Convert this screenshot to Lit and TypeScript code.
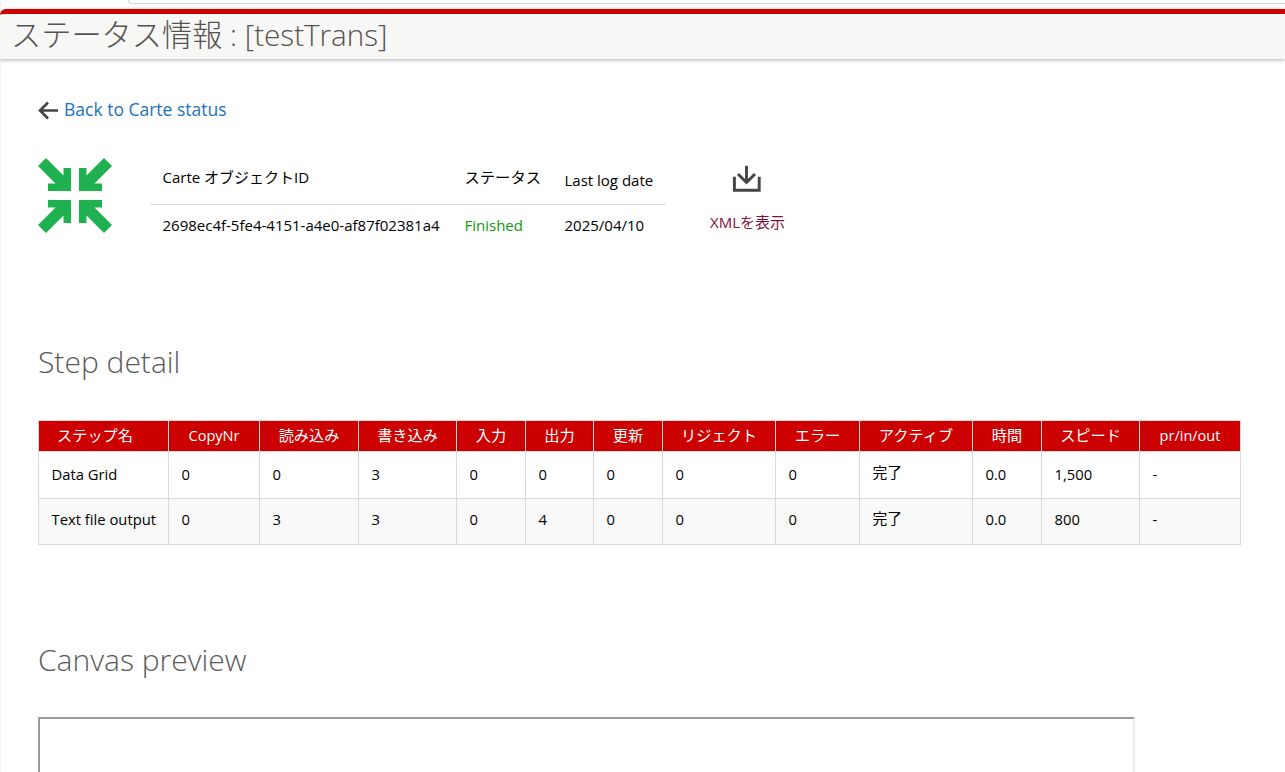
import { LitElement, html, css } from "lit";
import { customElement } from "lit/decorators.js";

const HEAD = ["ステップ名", "CopyNr", "読み込み", "書き込み", "入力", "出力", "更新", "リジェクト", "エラー", "アクティブ", "時間", "スピード", "pr/in/out"];
const ROWS = [
  ["Data Grid", "0", "0", "3", "0", "0", "0", "0", "0", "完了", "0.0", "1,500", "-"],
  ["Text file output", "0", "3", "3", "0", "4", "0", "0", "0", "完了", "0.0", "800", "-"],
];

@customElement("app-root")
export class AppRoot extends LitElement {
  static styles = css`
    :host { display: block; height: 772px; overflow: hidden; background: #fff; box-shadow: inset 1px 0 #f2f2f2; font-family: "Open Sans", "Noto Sans CJK JP", sans-serif; font-size: 15px; color: #000; }
    .chrome { height: 9px; overflow: hidden; }
    .chrome-field { height: 3px; margin-left: 128px; border: 1px solid #d4d4d4; border-top: 0; border-right: 0; border-bottom-left-radius: 8px; }
    .banner { height: 45px; background: #f7f7f5; border-top: 5px solid #cc0000; border-top-left-radius: 6px; box-shadow: 0 1px 4px rgba(0,0,0,.32); padding-left: 11px; display: flex; align-items: center; }
    .banner h1 { margin: 0 0 4px; font-weight: 300; font-size: 30.2px; line-height: 42px; color: #55524f; white-space: nowrap; }
    .banner .name { font-size: 29.6px; }
    main { padding: 36px 0 0 38px; }
    .back { display: flex; align-items: center; gap: 5px; height: 28px; font-size: 17.5px; color: #1d72c0; }
    .back svg { display: block; }
    .summary { display: flex; margin-top: 35px; height: 80px; }
    .logo { width: 74px; height: 75px; flex: none; margin-right: 38px; }
    .info { width: 516px; flex: none; }
    .info-row { display: grid; grid-template-columns: 302px 100px 1fr; padding-left: 12.5px; white-space: nowrap; line-height: 20px; }
    .info-head { padding-bottom: 8px; height: 38px; align-items: center; border-bottom: 1px solid #dfdfdf; }
    .info-head span:nth-child(3) { padding-top: 5px; }
    .info-head span:nth-child(2) { font-size: 15.3px; }
    .info-body { height: 39px; align-items: center; }
    .finished { color: #0a9a0a; }
    .xml { margin-left: 44px; width: 75px; display: flex; flex-direction: column; align-items: center; }
    .xml svg { margin: 6px 2px 0 0; display: block; }
    .xml-label { margin-top: 19px; line-height: 22px; color: #7f0f3d; white-space: nowrap; }
    h2 { margin: 0; font-weight: 300; font-size: 30px; line-height: 40px; color: #5c5a58; }
    .step { margin-top: 104px; }
    table { margin-top: 38px; border-collapse: collapse; table-layout: fixed; width: 1202px; font-size: 14.8px; line-height: 20px; }
    th { box-sizing: border-box; background: #cc0000; color: #fff; font-weight: 400; font-size: 14.5px; height: 31px; padding: 0; text-align: center; border: 1px solid #d9d9d9; white-space: nowrap; }
    th.cjk { font-size: 15.2px; padding-bottom: 3px; }
    th.first { padding-right: 17px; }
    td { box-sizing: border-box; height: 47px; padding: 0 12.5px 3px; border: 1px solid #d9d9d9; white-space: nowrap; }
    tr:nth-child(even) td { background: #f9f9f9; height: 46px; padding-bottom: 5px; }
    td.cjk, tr:nth-child(even) td.cjk { padding-bottom: 7px; }
    .canvas-title { margin-top: 95px; }
    .canvas { margin-top: 37px; width: 1093px; height: 100px; border-top: 2px solid #9a9a9a; border-left: 2px solid #9a9a9a; border-right: 2px solid #ececec; }
  `;

  render() {
    const widths = [130, 91, 99, 98, 69, 68, 69, 113, 84, 113, 69, 98, 101];
    return html`
      <div class="chrome"><div class="chrome-field"></div></div>
      <header class="banner"><h1>ステータス情報<span class="name"> : [testTrans]</span></h1></header>
      <main>
        <div class="back">
          <svg width="21" height="24" viewBox="0 0 21 24" fill="none" stroke="#444" stroke-width="2.6"><path d="M20 13.5H2.5M10 5.5L2 13.5L10 21.5"/></svg>
          <span>Back to Carte status</span>
        </div>
        <section class="summary">
          <svg class="logo" viewBox="0 0 74 75" fill="#1fb14f">
            <path d="M8 0L25.5 17.5V10H33V33H10V25.5H17.5L0 8Z"/>
            <path d="M8 0L25.5 17.5V10H33V33H10V25.5H17.5L0 8Z" transform="translate(74 0) scale(-1 1)"/>
            <path d="M8 0L25.5 17.5V10H33V33H10V25.5H17.5L0 8Z" transform="translate(0 75) scale(1 -1)"/>
            <path d="M8 0L25.5 17.5V10H33V33H10V25.5H17.5L0 8Z" transform="translate(74 75) scale(-1 -1)"/>
          </svg>
          <div class="info">
            <div class="info-row info-head"><span>Carte オブジェクトID</span><span>ステータス</span><span>Last log date</span></div>
            <div class="info-row info-body"><span>2698ec4f-5fe4-4151-a4e0-af87f02381a4</span><span class="finished">Finished</span><span>2025/04/10</span></div>
          </div>
          <div class="xml">
            <svg width="30" height="28" viewBox="0 0 30 28" fill="none" stroke="#444" stroke-width="2.9"><path d="M14.5 1.7V17M6 10L14.5 18.5L23 10"/><path d="M2.4 12.7V26.2H27.2V12.7"/></svg>
            <span class="xml-label">XMLを表示</span>
          </div>
        </section>
        <h2 class="step">Step detail</h2>
        <table>
          <colgroup>${widths.map((w) => html`<col style="width:${w}px" />`)}</colgroup>
          <thead><tr>${HEAD.map((h, i) => html`<th class="${/^[A-Za-z]/.test(h) ? "" : "cjk"} ${i === 0 ? "first" : ""}">${h}</th>`)}</tr></thead>
          <tbody>${ROWS.map((r) => html`<tr>${r.map((c) => html`<td class=${c === "完了" ? "cjk" : ""}>${c}</td>`)}</tr>`)}</tbody>
        </table>
        <h2 class="canvas-title">Canvas preview</h2>
        <div class="canvas"></div>
      </main>
    `;
  }
}
